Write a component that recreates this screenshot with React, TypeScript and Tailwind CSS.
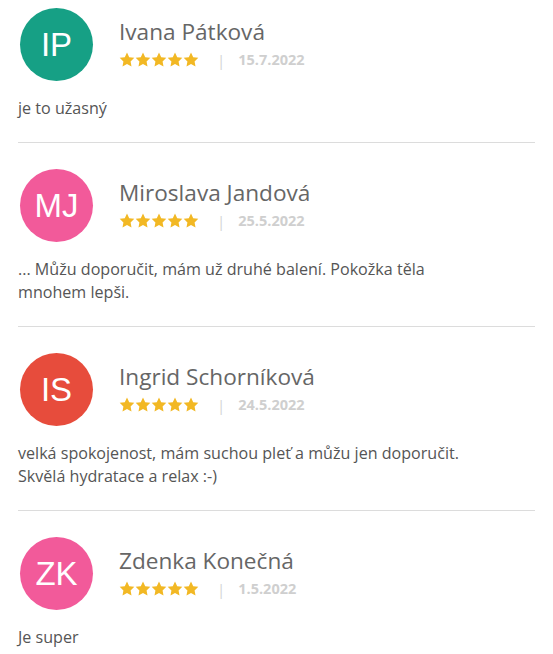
import React from 'react';

type Review = {
  initials: string;
  name: string;
  date: string;
  text: React.ReactNode;
  color: string;
};

const reviews: Review[] = [
  { initials: 'IP', name: 'Ivana Pátková', date: '15.7.2022', text: 'je to užasný', color: 'bg-[#16a085]' },
  {
    initials: 'MJ',
    name: 'Miroslava Jandová',
    date: '25.5.2022',
    text: (
      <>
        ... Můžu doporučit, mám už druhé balení. Pokožka těla
        <br />
        mnohem lepši.
      </>
    ),
    color: 'bg-[#f25a9a]',
  },
  {
    initials: 'IS',
    name: 'Ingrid Schorníková',
    date: '24.5.2022',
    text: (
      <>
        velká spokojenost, mám suchou pleť a můžu jen doporučit.
        <br />
        Skvělá hydratace a relax :-)
      </>
    ),
    color: 'bg-[#e74c3c]',
  },
  { initials: 'ZK', name: 'Zdenka Konečná', date: '1.5.2022', text: 'Je super', color: 'bg-[#f25a9a]' },
];

function Star() {
  return (
    <svg width="16" height="15" viewBox="0 0 24 23" className="fill-[#f2b824]">
      <path d="M12 0.8l3.4 7.2 7.8 1-5.7 5.4 1.4 7.8L12 18.4l-6.9 3.8 1.4-7.8L0.8 9l7.8-1z" />
    </svg>
  );
}

export default function App() {
  return (
    <div className="w-[553px] bg-white px-[18px] font-['Open_Sans',sans-serif]">
      {reviews.map((r, i) => (
        <div
          key={r.name}
          className={`${i === 0 ? 'pt-[8px]' : 'pt-[26px]'} ${i < reviews.length - 1 ? 'border-b border-[#dcdcdc] pb-[22px]' : 'pb-4'}`}
        >
          <div className="flex items-center">
            <div
              className={`ml-[2px] flex h-[73px] w-[73px] shrink-0 items-center justify-center rounded-full ${r.color} font-['Liberation_Sans',Arial,sans-serif] text-[33px] text-white`}
            >
              {r.initials}
            </div>
            <div className="ml-[26px] -mt-[2px]">
              <div className="text-[22.6px] leading-[28px] text-[#666]">{r.name}</div>
              <div className="mt-[4px] flex items-center">
                <div className="flex gap-0">
                  <Star />
                  <Star />
                  <Star />
                  <Star />
                  <Star />
                </div>
                <span className="ml-[18px] text-[15px] leading-[20px] text-[#d4d4d4]">|</span>
                <span className="ml-[13px] text-[14.5px] leading-[20px] font-bold text-[#cfcfcf]">{r.date}</span>
              </div>
            </div>
          </div>
          <p className="mt-[16px] text-[16.1px] leading-[23px] text-[#555]">{r.text}</p>
        </div>
      ))}
    </div>
  );
}
